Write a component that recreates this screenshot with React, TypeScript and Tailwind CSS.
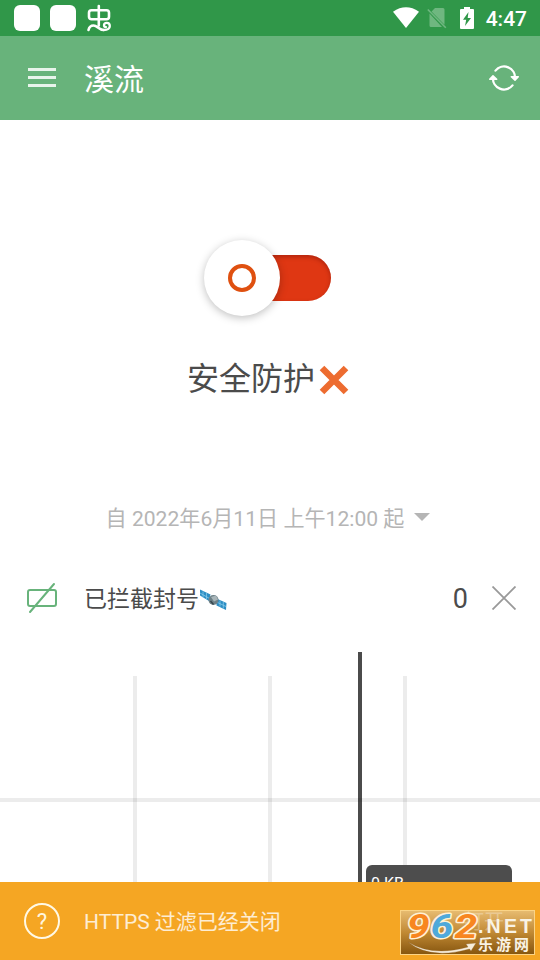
import type { ReactNode } from "react";

const GRID_COLUMNS = [135, 270, 405];

function StatusBar() {
    return (
        <div className="flex h-9 shrink-0 items-center justify-between bg-[#309749] pl-3.5 pr-[13px] text-white">
            <div className="flex items-center gap-2.5">
                <span className="size-[26px] rounded-[6px] bg-white" />
                <span className="size-[26px] rounded-[6px] bg-white" />
                {/* Bug glyph */}
                <svg width="26" height="28" viewBox="0 0 26 28" fill="none" stroke="currentColor" strokeWidth="2.600" strokeLinecap="round" strokeLinejoin="round">
                    <rect x="3" y="6.300" width="20" height="9" rx="2.500" />
                    <path d="M12.800 2v19.500M2.500 26q1-4.500 5-4.500c4 0 5 4.500 10 4.500" />
                    <path d="M17.500 26c4 0 6.300-1.500 6.300-4 0-2-1.300-3.200-3-3.200-1.700 0-2.800 1-2.800 2.400 0 1.200.9 1.900 2 1.900" strokeWidth="2.300" />
                </svg>
            </div>
            <div className="flex items-center">
                <svg width="26" height="22" viewBox="0 0 26 22" className="mr-2" fill="currentColor">
                    <path d="M0 4.700Q13-4 26 4.700L13 21z" />
                </svg>
                <svg width="20" height="22" viewBox="0 0 20 22" className="mr-[13px]">
                    <path d="M4.500 4.500L8 1h8q1.500 0 1.500 1.500v15.300zM2.500 6.500L15 20H4q-1.500 0-1.500-1.500z" fill="#6fb780" />
                    <path d="M.8 2.500l18 18.300" stroke="#6fb780" strokeWidth="1.600" />
                </svg>
                <svg width="14" height="22" viewBox="0 0 14 22" className="mr-3">
                    <path d="M4 0h6v2h3q1 0 1 1v18q0 1-1 1H1q-1 0-1-1V3q0-1 1-1h3z" fill="currentColor" />
                    <path d="M8.500 5L3 12.800h3.200L5 19l6-8H7.700z" fill="#309749" />
                </svg>
                <span className="mt-0.5 text-[21px] font-medium leading-none">4:47</span>
            </div>
        </div>
    );
}

function AppBar() {
    return (
        <div className="flex h-[84px] shrink-0 items-center bg-[#68b37b] pl-7 pr-[21px] text-white">
            <div className="mb-px flex w-7 flex-col gap-[5px]">
                <span className="h-[3px] bg-white/85" />
                <span className="h-[3px] bg-white/85" />
                <span className="h-[3px] bg-white/85" />
            </div>
            <h1 className="ml-7 mt-[3px] flex-1 text-[30px] leading-none">溪流</h1>
            <svg width="30" height="26" viewBox="0 0 30 26" fill="none" stroke="currentColor" strokeWidth="2.300" strokeLinecap="round" strokeLinejoin="round">
                <path d="M6.500 5.600A11 11 0 0 1 26 13.500" />
                <path d="M23.500 20.400A11 11 0 0 1 4 12.500" />
                <path d="M22.300 11.800l3.700 3.500 3.300-3.500zM.7 14.200l3.300-3.500 3.700 3.500z" fill="currentColor" strokeWidth="1.500" />
            </svg>
        </div>
    );
}

function ProtectionSwitch() {
    return (
        <div className="relative h-[76px] w-[128px]">
            <div className="absolute right-[1px] top-[15px] h-[46px] w-[100px] rounded-full bg-[#df3713] shadow-[inset_0_2px_4px_rgba(90,0,0,0.35)]" />
            <div className="absolute left-0 top-0 flex size-[76px] items-center justify-center rounded-full bg-white shadow-[0_2px_8px_rgba(0,0,0,0.25)]">
                <span className="size-[28px] rounded-full border-[4.500px] border-[#df5010]" />
            </div>
        </div>
    );
}

function Satellite() {
    return (
        <svg width="28" height="22" viewBox="0 0 28 22" className="mt-px">
            <path d="M1 .5l10.500 5-1.500 6.500L1 6.500z" fill="#2d8ec4" />
            <path d="M17.500 9.500l10 4.500-.5 7-9.500-4.500z" fill="#2d8ec4" />
            <path d="M4 2.500v6M7.500 4v6.500M1 4l9.500 5.500M21 11.500v6M24.300 13v6.500M17.500 13l9.500 4.500" stroke="#8ed0ee" strokeWidth=".7" />
            <circle cx="14.500" cy="11" r="5" fill="#6d8087" />
            <path d="M12 8l5-1.500 2 4-4 2z" fill="#a8b5b9" />
            <path d="M11.500 12l3 3.500" stroke="#37474f" strokeWidth="1.500" />
        </svg>
    );
}

function TrafficChart() {
    return (
        <div className="relative h-[230px] overflow-hidden">
            <svg width="540" height="230" viewBox="0 0 540 230">
                {GRID_COLUMNS.map((x) => (
                    <rect key={x} x={x - 2} y="24" width="4" height="206" fill="#000" fillOpacity=".075" />
                ))}
                <rect x="358" y="0" width="4" height="230" fill="#4b4b4b" />
                <rect x="0" y="146" width="540" height="4" fill="#000" fillOpacity=".075" />
            </svg>
            <div className="absolute left-[366px] top-[213px] h-[60px] w-[146px] rounded-[6px] bg-[#4d4d4d] pl-[5px] pt-[9px] text-[16px] leading-[19px] text-white">
                0 KB
            </div>
        </div>
    );
}

function SiteBadge() {
    return (
        <div className="absolute left-[400px] top-[28px] h-[45px] w-[135px] border border-[#fbd486] bg-linear-to-b from-[#e5bd78]/90 via-[#bb8635]/90 to-[#7b4e0c]/90">
            <svg width="133" height="43" viewBox="0 0 133 43" className="block">
                <text x="63" y="18" fontSize="20" fill="#fff" fillOpacity=".3">打开</text>
                <g className="font-[Roboto] text-[34px] font-bold italic [paint-order:stroke_fill]" stroke="#fff1d5" strokeWidth="3" strokeLinejoin="round">
                    <text transform="translate(6 27) scale(1.2 1)" fill="#f8861f">9</text>
                    <text transform="translate(29.500 27) scale(1.2 1)" fill="#4fa9da">6</text>
                    <text transform="translate(53.500 27) scale(1.2 1)" fill="#f8861f">2</text>
                </g>
                <path d="M7 31Q31 46 67 36L65 33l10-1-5 8-1.500-2Q29 49 7 31z" fill="#f7eedc" stroke="#8b6025" strokeWidth=".3" />
                <g fill="#f9f3e5" fontWeight="bold">
                    <text x="77" y="21.500" fontFamily="Liberation Sans" fontSize="19.500" textLength="54">.NET</text>
                    <text x="77" y="39" fontFamily="Noto Sans CJK SC" fontSize="15" textLength="51">乐游网</text>
                </g>
            </svg>
        </div>
    );
}

function Row({ icon, children, count }: { icon: ReactNode; children: ReactNode; count: number }) {
    return (
        <div className="flex h-[52px] items-center pl-[26px] pr-6 text-[#4b4b4b]">
            {icon}
            <div className="ml-[26px] mt-[3px] flex flex-1 items-center text-[23px] leading-none">{children}</div>
            <span className="mr-6 mt-[3px] text-[27px] leading-none">{count}</span>
            <svg width="24" height="24" viewBox="0 0 24 24" stroke="#999" strokeWidth="1.800">
                <path d="M.5.5l23 23M23.500.5l-23 23" />
            </svg>
        </div>
    );
}

export default function App() {
    return (
        <div className="flex h-[960px] w-[540px] flex-col overflow-hidden bg-white font-['Roboto','Noto_Sans_CJK_SC',sans-serif]">
            <StatusBar />
            <AppBar />

            {/* Protection state */}
            <div className="flex h-[452px] shrink-0 flex-col items-center pr-1 pt-[120px]">
                <ProtectionSwitch />
                <div className="mt-[45px] flex h-9 items-center text-[32px] leading-none text-[#4b4b4b]">
                    安全防护
                    <svg width="30" height="30" viewBox="0 0 30 30" className="ml-1 mt-px" stroke="#ed6c30" strokeWidth="6.500">
                        <path d="M3 3l24 24M27 3l-24 24" />
                    </svg>
                </div>
                <div className="mt-[109px] flex items-center text-[21.1px] leading-[26px] text-[#b5b5b5]">
                    自 2022年6月11日 上午12:00 起
                    <svg width="16" height="8" viewBox="0 0 16 8" className="-mt-1 ml-2.5" fill="#b5b5b5">
                        <path d="M0 0h16L8 8z" />
                    </svg>
                </div>
            </div>

            <Row
                count={0}
                icon={
                    <svg width="32" height="32" viewBox="0 0 32 32" fill="none" stroke="#68b37b" strokeWidth="2" strokeLinecap="round">
                        <rect x="2" y="8" width="28" height="16" rx="2" />
                        <path d="M28 2L4 30" />
                    </svg>
                }
            >
                已拦截封号
                <Satellite />
            </Row>

            <div className="h-7 shrink-0" />
            <TrafficChart />

            {/* HTTPS notice */}
            <div className="relative flex h-[78px] shrink-0 items-center bg-[#f5a623] pl-6 text-white">
                <span className="flex size-9 items-center justify-center rounded-full border-2 border-[#fff9e5] pt-0.5 text-[22px] leading-none text-[#fff6df]">?</span>
                <span className="ml-6 mt-[3px] flex-1 text-[21px] leading-none text-white/80">HTTPS 过滤已经关闭</span>
                <SiteBadge />
            </div>
        </div>
    );
}
